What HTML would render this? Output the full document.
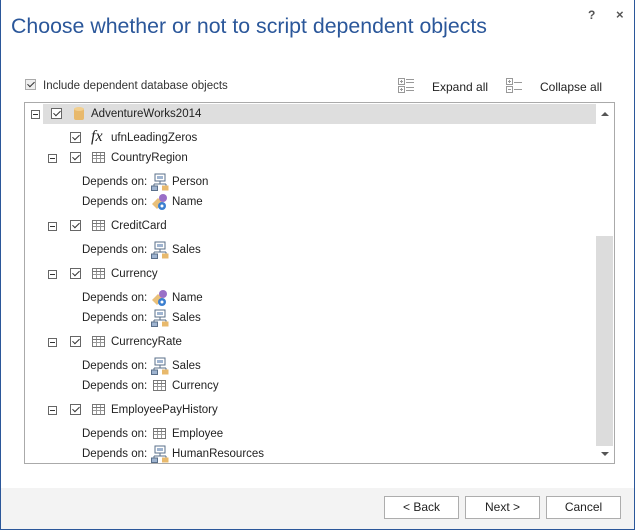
<!DOCTYPE html>
<html><head><meta charset="utf-8"><style>
*{margin:0;padding:0;box-sizing:border-box}
body{width:635px;height:530px;overflow:hidden;background:#fff;font-family:"Liberation Sans",sans-serif;font-size:11.5px;color:#222;position:relative}
.win{position:absolute;left:0;top:0;width:635px;height:530px;border:1px solid #2b579a;border-top:none}
.a{position:absolute;white-space:nowrap}
.t{position:absolute;white-space:nowrap;margin-top:2px}
.cb{position:absolute;width:11px;height:11px;border:1px solid #666;background:#fff}
.cb:after{content:"";position:absolute;left:3px;top:0px;width:3px;height:6px;border:solid #333;border-width:0 1.5px 1.5px 0;transform:rotate(45deg)}
.ex{position:absolute;width:9px;height:9px;border:1px solid #666;background:#fff}
.ex:after{content:"";position:absolute;left:1px;top:3px;width:5px;height:1px;background:#333}
.tb{position:absolute;width:13px;height:11px;border:1px solid #777;background:
linear-gradient(#777,#777) 0 2px/100% 1px no-repeat,
linear-gradient(#999,#999) 0 5px/100% 1px no-repeat,
linear-gradient(#999,#999) 3px 0/1px 100% no-repeat,
linear-gradient(#999,#999) 7px 0/1px 100% no-repeat}
.btn{position:absolute;top:496px;height:23px;width:75px;border:1px solid #adadad;background:#fff;text-align:center;line-height:21px;font-size:12px}
</style></head><body>
<div class="win"></div>
<div class="a" style="left:11px;top:14px;font-size:21.3px;color:#2b579a">Choose whether or not to script dependent objects</div>
<div class="a" style="left:588px;top:8px;font-weight:bold;font-size:12px;color:#555">?</div>
<div class="a" style="left:616px;top:7px;font-weight:bold;font-size:13px;color:#555">×</div>

<div class="cb" style="left:25px;top:79px;border-color:#aaa;background:#eee"></div>
<div class="t" style="left:43px;top:78px;color:#333">Include dependent database objects</div>
<svg class="a" style="left:398px;top:78px" width="16" height="16"><rect x="0.5" y="0.5" width="6" height="6" fill="none" stroke="#999"/><rect x="0.5" y="8.5" width="6" height="6" fill="none" stroke="#999"/><path d="M2 3.5h3M3.5 2v3M2 11.5h3M3.5 10v3M8 1.5h8M8 4.5h8M8 9.5h8M8 12.5h8" stroke="#999"/></svg>
<div class="t" style="left:432px;top:78px;font-size:12px">Expand all</div>
<svg class="a" style="left:506px;top:78px" width="16" height="16"><rect x="0.5" y="0.5" width="6" height="6" fill="none" stroke="#999"/><rect x="0.5" y="8.5" width="6" height="6" fill="none" stroke="#999"/><path d="M2 3.5h3M3.5 2v3M2 11.5h3M8 4.5h8M8 11.5h8" stroke="#999"/></svg>
<div class="t" style="left:540px;top:78px;font-size:12px">Collapse all</div>

<div class="a" style="left:24px;top:102px;width:591px;height:362px;border:1px solid #aaa"></div>
<div class="a" style="left:43px;top:104px;width:553px;height:20px;background:#dedede"></div>
<div class="a" style="left:596px;top:236px;width:17px;height:210px;background:#dcdcdc"></div>
<div class="a" style="left:601px;top:112px;border:4px solid transparent;border-bottom:4px solid #555;border-top:none;width:0;height:0"></div>
<div class="a" style="left:601px;top:452px;border:4px solid transparent;border-top:4px solid #555;border-bottom:none;width:0;height:0"></div>

<div class="ex" style="left:31px;top:110px"></div>
<div class="cb" style="left:51px;top:108px"></div>
<svg class="a" style="left:74px;top:107px" width="10" height="14"><rect x="0" y="1" width="10" height="12" rx="2" fill="#e8b96c"/><ellipse cx="5" cy="2" rx="5" ry="2" fill="#f2cf8f"/></svg>
<div class="t" style="left:91px;top:106px">AdventureWorks2014</div>

<div class="cb" style="left:70px;top:132px"></div>
<div class="a" style="left:91px;top:128px;font-family:'Liberation Serif',serif;font-style:italic;font-size:16px">fx</div>
<div class="t" style="left:111px;top:130px">ufnLeadingZeros</div>

<div class="ex" style="left:48px;top:154px"></div><div class="cb" style="left:70px;top:152px"></div><div class="tb" style="left:92px;top:152px"></div><div class="t" style="left:111px;top:150px">CountryRegion</div>
<div class="ex" style="left:48px;top:222px"></div><div class="cb" style="left:70px;top:220px"></div><div class="tb" style="left:92px;top:220px"></div><div class="t" style="left:111px;top:218px">CreditCard</div>
<div class="ex" style="left:48px;top:270px"></div><div class="cb" style="left:70px;top:268px"></div><div class="tb" style="left:92px;top:268px"></div><div class="t" style="left:111px;top:266px">Currency</div>
<div class="ex" style="left:48px;top:338px"></div><div class="cb" style="left:70px;top:336px"></div><div class="tb" style="left:92px;top:336px"></div><div class="t" style="left:111px;top:334px">CurrencyRate</div>
<div class="ex" style="left:48px;top:406px"></div><div class="cb" style="left:70px;top:404px"></div><div class="tb" style="left:92px;top:404px"></div><div class="t" style="left:111px;top:402px">EmployeePayHistory</div>

<svg width="0" height="0" style="position:absolute"><defs>
<symbol id="sc" viewBox="0 0 18 18"><rect x="4" y="1" width="10" height="7" fill="#fff" stroke="#5a6f8a"/><rect x="6" y="3" width="6" height="3" fill="#9fb4d0"/><path d="M9 8v3M3 11h12M3 11v2M15 11v2" stroke="#5a6f8a"/><rect x="0.5" y="13" width="6" height="4.5" fill="#9fb4d0" stroke="#5a6f8a"/><rect x="11" y="12.5" width="6.5" height="5" fill="#e8b96c"/></symbol>
<symbol id="tg" viewBox="0 0 18 18"><path d="M1 11l6-6 5 5-6 6z" fill="#e9c07a"/><circle cx="12" cy="5" r="4" fill="#9a6fc7"/><circle cx="11" cy="13" r="4" fill="#3b7fd0"/><circle cx="11" cy="13" r="1.5" fill="#fff"/></symbol>
</defs></svg>

<div class="t" style="left:82px;top:174px">Depends on:</div><svg class="a" style="left:151px;top:173px" width="18" height="18"><use href="#sc"/></svg><div class="t" style="left:172px;top:174px">Person</div>
<div class="t" style="left:82px;top:194px">Depends on:</div><svg class="a" style="left:151px;top:193px" width="18" height="18"><use href="#tg"/></svg><div class="t" style="left:172px;top:194px">Name</div>
<div class="t" style="left:82px;top:242px">Depends on:</div><svg class="a" style="left:151px;top:241px" width="18" height="18"><use href="#sc"/></svg><div class="t" style="left:172px;top:242px">Sales</div>
<div class="t" style="left:82px;top:290px">Depends on:</div><svg class="a" style="left:151px;top:289px" width="18" height="18"><use href="#tg"/></svg><div class="t" style="left:172px;top:290px">Name</div>
<div class="t" style="left:82px;top:310px">Depends on:</div><svg class="a" style="left:151px;top:309px" width="18" height="18"><use href="#sc"/></svg><div class="t" style="left:172px;top:310px">Sales</div>
<div class="t" style="left:82px;top:358px">Depends on:</div><svg class="a" style="left:151px;top:357px" width="18" height="18"><use href="#sc"/></svg><div class="t" style="left:172px;top:358px">Sales</div>
<div class="t" style="left:82px;top:378px">Depends on:</div><div class="tb" style="left:153px;top:380px"></div><div class="t" style="left:172px;top:378px">Currency</div>
<div class="t" style="left:82px;top:426px">Depends on:</div><div class="tb" style="left:153px;top:428px"></div><div class="t" style="left:172px;top:426px">Employee</div>
<div class="t" style="left:82px;top:446px">Depends on:</div><svg class="a" style="left:151px;top:445px" width="18" height="18"><use href="#sc"/></svg><div class="t" style="left:172px;top:446px">HumanResources</div>

<div class="a" style="left:1px;top:488px;width:633px;height:41px;background:#f3f3f3"></div>
<div class="btn" style="left:384px">&lt; Back</div>
<div class="btn" style="left:465px">Next &gt;</div>
<div class="btn" style="left:546px">Cancel</div>
</body></html>
